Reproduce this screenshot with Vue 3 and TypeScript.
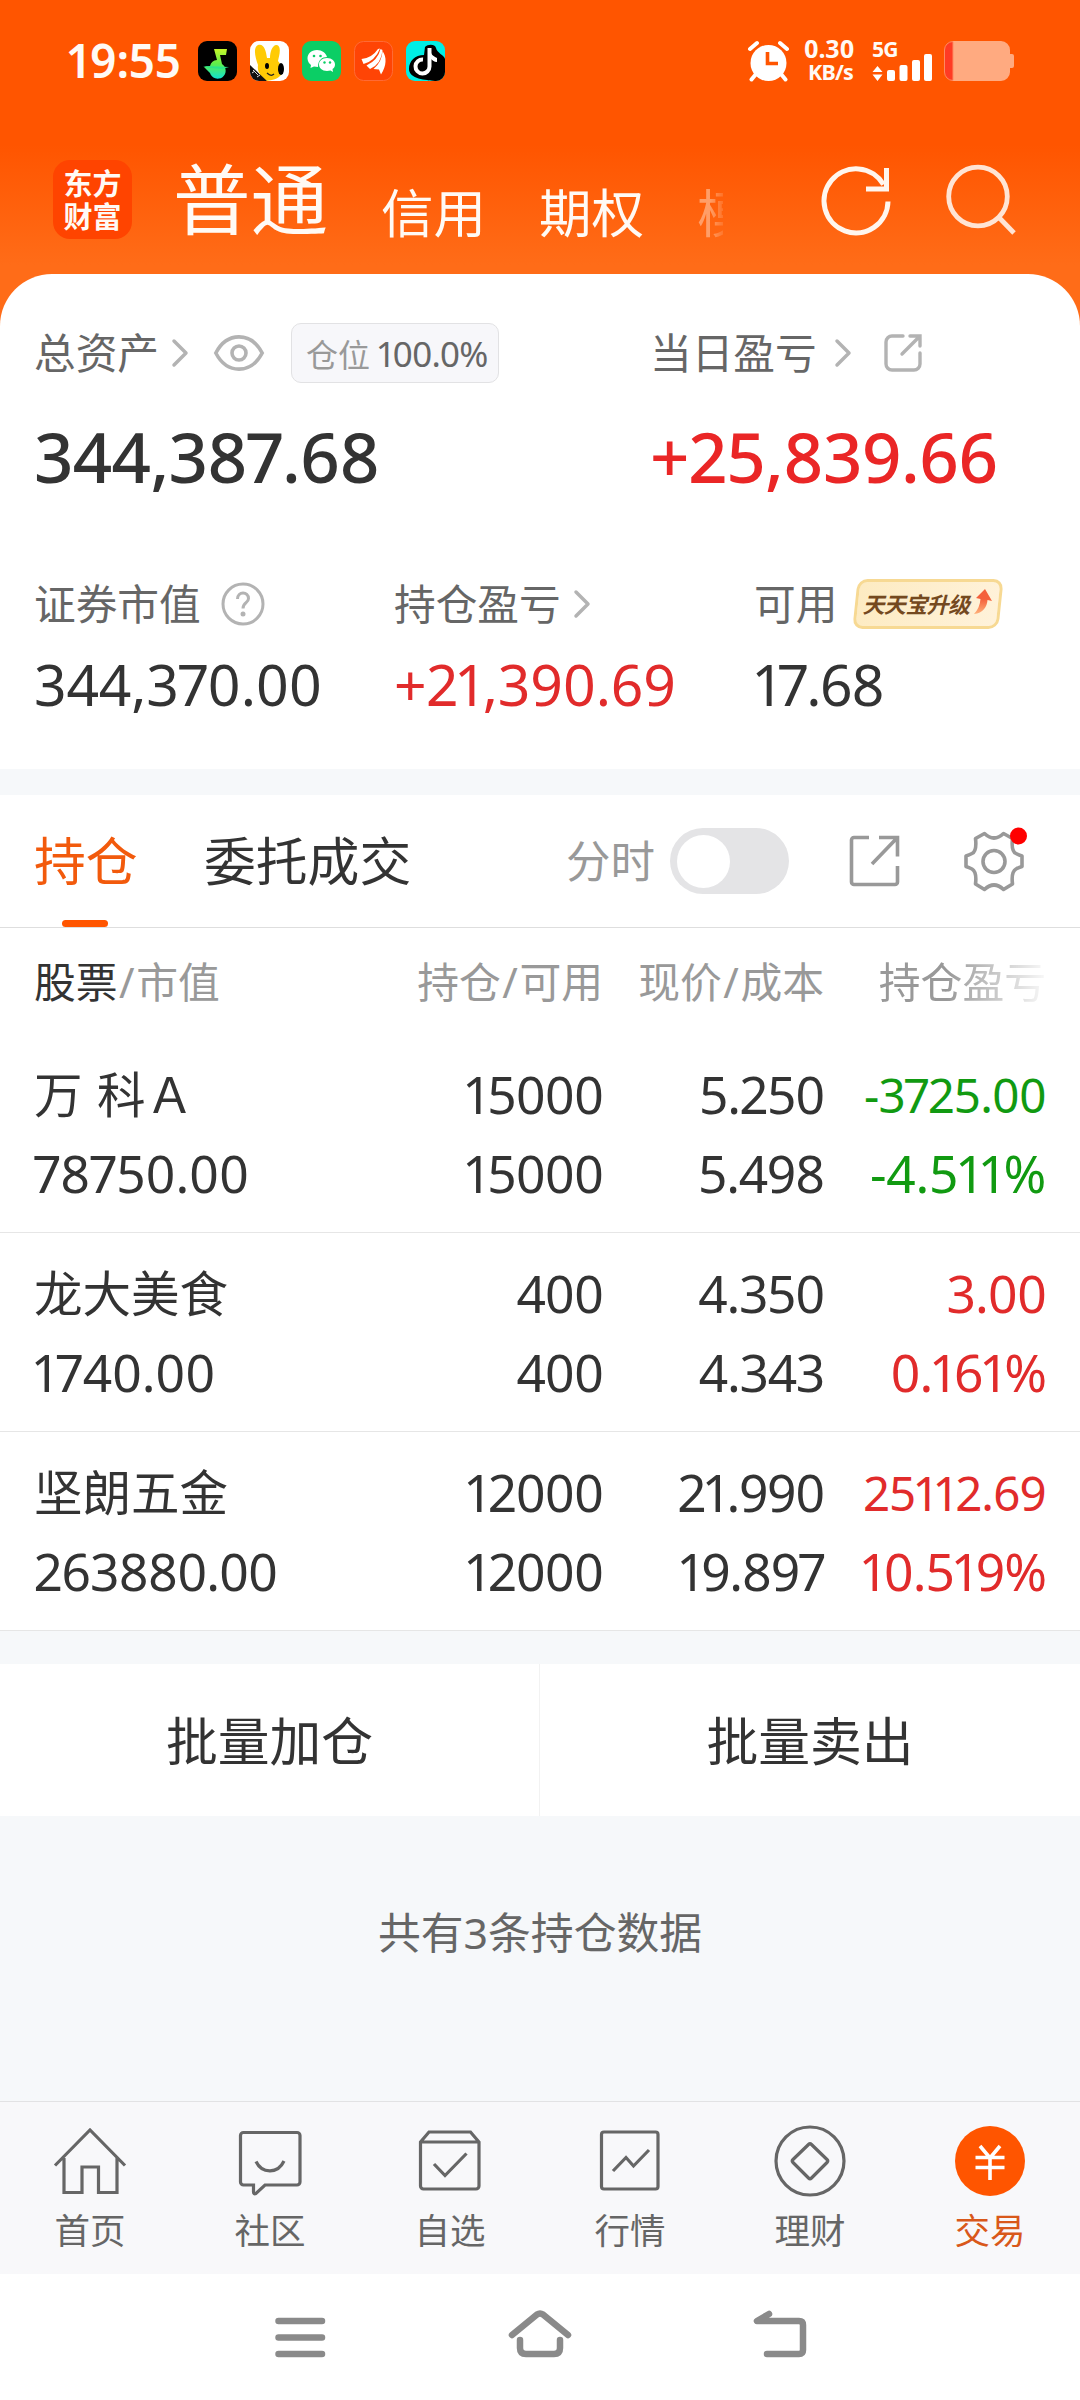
<script setup lang="ts">
interface Cell { text: string; small?: boolean; loose?: boolean; snug?: boolean }
interface Holding { name: string; tone: 'up' | 'down'; cells: Cell[][] }

const holdings: Holding[] = [
  {
    name: '万 科Ａ',
    tone: 'down',
    cells: [
      [{ text: '78750.00', loose: true }],
      [{ text: '15000' }, { text: '15000' }],
      [{ text: '5.250', snug: true }, { text: '5.498', snug: true }],
      [{ text: '-3725.00', small: true }, { text: '-4.511%', loose: true }],
    ],
  },
  {
    name: '龙大美食',
    tone: 'up',
    cells: [
      [{ text: '1740.00', loose: true }],
      [{ text: '400' }, { text: '400' }],
      [{ text: '4.350', snug: true }, { text: '4.343', snug: true }],
      [{ text: '3.00' }, { text: '0.161%' }],
    ],
  },
  {
    name: '坚朗五金',
    tone: 'up',
    cells: [
      [{ text: '263880.00' }],
      [{ text: '12000' }, { text: '12000' }],
      [{ text: '21.990', snug: true }, { text: '19.897', snug: true }],
      [{ text: '25112.69', small: true }, { text: '10.519%' }],
    ],
  },
]

const tabs = ['首页', '社区', '自选', '行情', '理财', '交易']
</script>

<template>
  <div class="screen">
    <header class="top">
      <div class="status">
        <span class="clock">19:55</span>
        <div class="apps">
          <svg viewBox="0 0 39 40">
            <defs>
              <linearGradient id="note" x1="0" y1="0" x2="0" y2="1">
                <stop offset="0" stop-color="#c6f528" /><stop offset=".5" stop-color="#5fee4a" /><stop offset="1" stop-color="#10e3d0" />
              </linearGradient>
            </defs>
            <rect width="39" height="40" rx="9" fill="#000" />
            <path d="M16 8H29L28 14H22L24 23A8 8 0 1 1 12 32L6 26L12 25A8 8 0 0 1 19 19Z" fill="url(#note)" />
            <path d="M5 25L31 26L24 28L12 27Z" fill="#2be58a" />
          </svg>
          <svg viewBox="0 0 39 40">
            <rect width="39" height="40" rx="9" fill="#fff" />
            <path d="M8 24C5 16 3 6 8 4C14 2 16 10 17 17H20C20 10 23 3 27 4C32 6 29 15 28 20C32 24 33 30 31 34C28 38 22 39 17 40C10 36 7 30 8 24Z" fill="#ffcb05" />
            <path d="M0 24L17 40H9A9 9 0 0 1 0 31Z" fill="#111" />
            <ellipse cx="17" cy="25" rx="2" ry="3" /><ellipse cx="31" cy="28" rx="3" ry="6" />
            <path d="M17 32Q21 36 24 33" fill="none" stroke="#222" stroke-width="1.2" />
            <path d="M3 29L8 34M5 28L10 33M2 32L5 30M7 36L10 34" stroke="#ddd" stroke-width="1" />
          </svg>
          <svg viewBox="0 0 39 40">
            <rect width="39" height="40" rx="9" fill="#0bce65" />
            <path d="M15 9C9 9 5.500 13 5.500 17.500C5.500 20 7 22.500 9 24L8.500 27L12 25.500L16 26C16 19 20 16 25 16C24 12 20 9 15 9Z" fill="#fff" />
            <path d="M25 17C20 17 17 20 17 23.500C17 27 20 30 25 30L28.500 29.500L31 31L30.500 28C32 27 33 25.500 33 23.500C33 20 30 17 25 17Z" fill="#fff" />
            <g fill="#0bce65"><circle cx="12" cy="15" r="1.300" /><circle cx="18.500" cy="15" r="1.300" /><circle cx="22.500" cy="21.500" r="1.200" /><circle cx="28" cy="21.500" r="1.200" /></g>
          </svg>
          <svg viewBox="0 0 39 40">
            <rect x=".5" y=".5" width="38" height="39" rx="9" fill="#ff4405" stroke="#ff6a35" />
            <g fill="#fff">
              <path d="M7.500 18Q18 17 24 8L26 7.500Q21 20 9.500 23Z" />
              <path d="M12.500 24.500Q24 19 26.500 8L28.500 9Q27.500 23 16 28Z" />
              <path d="M19.500 28Q28 21 28.500 10C33 16 32.500 25 27 33.500L25 28.500Z" />
            </g>
          </svg>
          <svg viewBox="0 0 39 40">
            <rect width="39" height="40" rx="9" fill="#00eee5" />
            <path d="M19 6C22 3 29 3 30 7C31 12 38 14 39 18V31A9 9 0 0 1 30 40H29C20 39 3 38 3 28C3 20 9 14 18 14Z" fill="#000" />
            <path d="M23.500 7V25.500A7 7 0 1 1 17 18.500" fill="none" stroke="#fff" stroke-width="4" />
            <path d="M24 8C25 14 27 15 31 17V21C28 21 26 19 24 17Z" fill="#fff" />
          </svg>
        </div>
        <svg class="alarm" viewBox="0 0 41 40">
          <circle cx="20.500" cy="22" r="18" fill="#fff" />
          <path d="M2 8L9 2M39 8L32 2M8 33L3.500 38.500M33 33L37.500 38.500" stroke="#fff" stroke-width="4" stroke-linecap="round" />
          <path d="M19.500 11V22.500H30" fill="none" stroke="#ff5500" stroke-width="3.600" />
        </svg>
        <div class="rate"><span>0.30</span><small>KB/s</small></div>
        <div class="signal">
          <b>5G</b>
          <svg viewBox="0 0 61 28">
            <path d="M5.500 12L10.500 18H.5ZM5.500 27L.5 20.500H10.500Z" fill="#fff" />
            <g fill="#fff"><rect x="15" y="16" width="8" height="11" rx="2" /><rect x="27.500" y="11" width="8" height="16" rx="2" /><rect x="40" y="6" width="8" height="21" rx="2" /><rect x="52" y="0" width="8" height="27" rx="2" /></g>
          </svg>
        </div>
        <svg class="battery" viewBox="0 0 70 40">
          <path d="M10 0H57A9 9 0 0 1 66 9V13H68A2 2 0 0 1 70 15V25A2 2 0 0 1 68 27H66V31A9 9 0 0 1 57 40H9V0Z" fill="#ffaa80" />
          <path d="M9 .5A8.500 8.500 0 0 0 .5 9V31A8.500 8.500 0 0 0 9 39.500Z" fill="#ff3b24" stroke="#ff8a60" stroke-width="1" />
        </svg>
      </div>
      <div class="nav">
        <div class="logo"><span>东方</span><span>财富</span></div>
        <span class="main">普通</span>
        <span class="alt">信用</span>
        <span class="alt">期权</span>
        <span class="alt cut">模拟</span>
        <svg class="refresh" viewBox="0 0 70 74">
          <path d="M62.500 20.500A32 32 0 1 0 67 37.500" fill="none" stroke="#fff6ee" stroke-width="5" />
          <path d="M65.500 4V25H45" fill="none" stroke="#fff6ee" stroke-width="5" />
        </svg>
        <svg class="search" viewBox="0 0 72 74">
          <circle cx="32" cy="32.500" r="29.300" fill="none" stroke="#ffe4d4" stroke-width="4.800" />
          <path d="M52.500 53L68 69" stroke="#ffe4d4" stroke-width="4.800" />
        </svg>
      </div>
    </header>

    <section class="assets">
      <div class="line first">
        <div class="half">
          <span class="label">总资产</span>
          <svg class="chev" viewBox="0 0 16 28"><path d="M2 2L14 14L2 26" /></svg>
          <svg class="eye" viewBox="0 0 50 36">
            <path d="M1.800 18C13-3.500 37-3.500 48.200 18C37 39.500 13 39.500 1.800 18Z" /><circle cx="25" cy="18" r="7" />
          </svg>
          <span class="pill">仓位<b>100.0%</b></span>
        </div>
        <div class="half">
          <span class="label">当日盈亏</span>
          <svg class="chev wide" viewBox="0 0 16 28"><path d="M2 2L14 14L2 26" /></svg>
          <svg class="share" viewBox="0 0 38 38">
            <path d="M19 2H8A6 6 0 0 0 2 8V30A6 6 0 0 0 8 36H30A6 6 0 0 0 36 30V19M26 2H36V12M36 2L18 20" />
          </svg>
        </div>
      </div>
      <div class="line big">
        <span class="half num">344,387.68</span>
        <span class="half num up">+25,839.66</span>
      </div>
      <div class="trio">
        <div>
          <div class="cap">
            <span class="label">证券市值</span>
            <svg class="help" viewBox="0 0 44 44"><circle cx="22" cy="22" r="20" /><path d="M16.500 17C16.500 9 27.500 9 27.500 16.500C27.500 21 22 20.500 22 26.500" /><circle class="dot" cx="22" cy="32" r="2.500" /></svg>
          </div>
          <span class="num">344,370.00</span>
        </div>
        <div>
          <div class="cap">
            <span class="label">持仓盈亏</span>
            <svg class="chev" viewBox="0 0 16 28"><path d="M2 2L14 14L2 26" /></svg>
          </div>
          <span class="num up">+21,390.69</span>
        </div>
        <div>
          <div class="cap">
            <span class="label">可用</span>
            <div class="promo">
              <span>天天宝升级</span>
              <svg viewBox="0 0 18 26"><defs><linearGradient id="arr" x1="0" y1="1" x2="0" y2="0"><stop offset="0" stop-color="#ffb27a" /><stop offset=".6" stop-color="#f4603c" /></linearGradient></defs><path d="M11 0L18 12L13.500 11C13 18 9 24 0 25C4 21 6 16 6.500 10L2 9Z" fill="url(#arr)" /></svg>
            </div>
          </div>
          <span class="num tight">17.68</span>
        </div>
      </div>
    </section>

    <section class="tools">
      <span class="tab on">持仓</span>
      <span class="tab">委托成交</span>
      <span class="minute">分时</span>
      <span class="toggle"><i></i></span>
      <svg class="export" viewBox="0 0 52 52"><path d="M20 2.500H5A2.500 2.500 0 0 0 2.500 5V47A2.500 2.500 0 0 0 5 49.500H46A2.500 2.500 0 0 0 48.500 47V31M30 2.500H48.500V21.500M48.500 2.500L23 29" /></svg>
      <svg class="gear" viewBox="0 0 64 68">
        <path d="M22.500 6.500Q32 15.500 41.500 6.500L50.500 11.500Q49 24 54 26.500Q57 28 60 29V39.500Q57 40.500 54 42Q49 45 50.500 57L41.500 62.500Q32 53.500 22.500 62.500L13.500 57Q15 45 10 42Q7 40.500 4 39.500V29Q7 28 10 26.500Q15 24 13.500 11.500Z" />
        <circle cx="32" cy="34.500" r="11" /><circle class="red" cx="56.500" cy="9" r="8.500" />
      </svg>
    </section>

    <section class="table">
      <div class="thead">
        <span><b>股票</b><i>/</i>市值</span><span>持仓<i>/</i>可用</span><span>现价<i>/</i>成本</span><span class="fade">持仓盈亏</span>
      </div>
      <div v-for="h in holdings" :key="h.name" class="row">
        <div v-for="(col, i) in h.cells" :key="i" :class="i === 3 ? h.tone : ''">
          <span v-if="i === 0" class="name">{{ h.name }}</span>
          <span v-for="(c, j) in col" :key="j" :class="{ small: c.small, loose: c.loose, snug: c.snug }">{{ c.text }}</span>
        </div>
      </div>
    </section>

    <section class="batch"><span>批量加仓</span><span>批量卖出</span></section>
    <p class="count">共有3条持仓数据</p>

    <nav class="tabbar">
      <div v-for="(t, i) in tabs" :key="t" :class="{ active: i === 5 }">
        <svg viewBox="0 0 80 80">
          <path v-if="i === 0" d="M5 44.500L40 9L75 44.500M14 37V71.500H32V46H48.500V71.500H67V37" />
          <template v-else-if="i === 1">
            <path d="M13.500 11.500H67A3 3 0 0 1 70 14.500V61A3 3 0 0 1 67 64H35L26 72.500Q23.500 73.500 23.500 71V64H13.500A3 3 0 0 1 10.500 61V14.500A3 3 0 0 1 13.500 11.500Z" />
            <path d="M26 40.500C32 53 48 53 54 40" />
          </template>
          <template v-else-if="i === 2">
            <path d="M10.500 21L19 11H60.500L69 21V65A3 3 0 0 1 66 68H13.500A3 3 0 0 1 10.500 65ZM10.500 21H69M24 43L35 54.500L56.500 32.500" />
          </template>
          <template v-else-if="i === 3">
            <rect x="11.500" y="11" width="56.500" height="57" rx="2.500" /><path d="M23 50L36 36.500L43.500 45L59 29" />
          </template>
          <template v-else-if="i === 4">
            <circle cx="40" cy="40" r="34" /><path d="M38.500 23.500Q40 22 41.500 23.500L57 38.500Q58.500 40 57 41.500L41.500 57Q40 58.500 38.500 57L23 41.500Q21.500 40 23 38.500Z" />
          </template>
          <template v-else>
            <circle class="coin" cx="40" cy="40" r="35" />
            <path class="yen" d="M30 25L40 37L50 25M25.500 36.500H54.500M25.500 46.500H54.500M40 36.500V59" />
          </template>
        </svg>
        <span>{{ t }}</span>
      </div>
    </nav>

    <footer class="system">
      <svg viewBox="0 0 64 50"><path d="M10.500 11H54M10.500 27.500H54M10.500 44H54" /></svg>
      <svg viewBox="0 0 64 50"><path d="M4 25L29 4.500Q32 2.500 35 4.500L60 25M12 30V38Q12 44 18 44H46Q52 44 52 38V30" /></svg>
      <svg viewBox="0 0 64 50"><path d="M21 4L9 11H51Q55 11 55 15V40Q55 44 51 44H19" /></svg>
    </footer>
  </div>
</template>

<style>
body { background: #fff; }
</style>

<style scoped>
.screen {
  width: 1080px;
  height: 2400px;
  display: flex;
  flex-direction: column;
  background: #f6f8fa;
  color: #333;
  font-family: 'Noto Sans', 'Noto Sans CJK SC', sans-serif;
  font-variant-numeric: proportional-nums;
  white-space: nowrap;
  overflow: hidden;
}
svg { display: block; flex: none; overflow: visible; }
b { font-weight: inherit; }
.up { color: #e12b2b; }
.down { color: #119a11; }

.top {
  height: 326px;
  flex: none;
  background: linear-gradient(#f50 0, #f50 145px, #ff6c18 265px);
  color: #fffaf5;
}
.status { height: 122px; display: flex; align-items: center; padding-left: 68px; }
.clock { width: 130px; font-size: 46px; font-weight: 600; line-height: 60px; letter-spacing: -0.6px; margin-top: -3px; }
.apps { display: flex; gap: 13px; }
.apps svg { width: 39px; height: 40px; }
.alarm { width: 41px; height: 40px; margin-left: 303px; }
.rate { width: 52px; margin-left: 14px; margin-top: -2px; display: flex; flex-direction: column; align-items: center; font-weight: 700; font-size: 25px; line-height: 23px; letter-spacing: -0.2px; }
.rate small { font-size: 21.500px; line-height: 23px; letter-spacing: -0.8px; padding-left: 3px; }
.signal { width: 61px; margin-left: 17px; height: 42px; }
.signal b { display: block; font-weight: 700; font-size: 21px; line-height: 18px; height: 14px; letter-spacing: -0.8px; }
.signal svg { width: 61px; height: 28px; }
.battery { width: 70px; height: 40px; margin-left: 11px; }

.nav { height: 152px; display: flex; padding-left: 53px; }
.logo {
  width: 79px; height: 79px; margin-top: 38px; border-radius: 17px; background: #ff4400;
  display: flex; flex-direction: column; align-items: center; justify-content: center;
  font-size: 29px; font-weight: 700; line-height: 33px;
}
.logo span { height: 33px; }
.main { margin: 32px 0 0 41px; font-size: 77.500px; line-height: 90px; width: 208px; }
.alt { margin-top: 61px; font-size: 52.500px; line-height: 60px; width: 158px; }
.cut {
  width: 26px; overflow: hidden; color: #ff9e68;
  -webkit-mask-image: linear-gradient(90deg, #000 50%, rgba(0, 0, 0, 0.3));
  mask-image: linear-gradient(90deg, #000 50%, rgba(0, 0, 0, 0.3));
}
.refresh { width: 70px; height: 74px; margin: 42px 0 0 98px; }
.search { width: 72px; height: 74px; margin: 42px 0 0 55px; }

.assets { height: 495px; flex: none; margin-top: -52px; background: #fff; border-radius: 52px 52px 0 0; }
.line { display: flex; padding-left: 34px; }
.half { width: 616px; flex: none; display: flex; align-items: center; }
.line .half + .half { width: 430px; }
.first { padding-top: 49px; height: 60px; }
.label { font-size: 41.700px; line-height: 56px; color: #666; }
.chev { width: 16px; height: 28px; margin-left: 13px; fill: none; stroke: #b3b3b3; stroke-width: 3.500; stroke-linecap: round; stroke-linejoin: round; }
.chev.wide { margin-left: 18px; }
.eye { width: 50px; height: 36px; margin-left: 26px; fill: none; stroke: #b3b3b3; stroke-width: 3.600; }
.pill {
  margin-left: 27px; width: 208px; height: 60px; box-sizing: border-box; border: 1px solid #e2e2e4; border-radius: 10px;
  background: #f7f7fa; padding-left: 14px; font-size: 32px; line-height: 59px; color: #999;
}
.pill b { font-size: 35px; color: #666; margin-left: 8px; letter-spacing: -1px; }
.share { width: 38px; height: 38px; margin-left: 33px; fill: none; stroke: #b3b3b3; stroke-width: 3.400; stroke-linecap: round; }
.big { padding-top: 35px; font-size: 69px; line-height: 76px; font-weight: 500; letter-spacing: -0.800px; }
.big .up { color: #ea2626; }
.trio { display: flex; padding: 80px 0 0 34px; }
.trio > div { width: 360px; flex: none; }
.trio > div:last-child { width: 320px; }
.cap { display: flex; align-items: center; height: 60px; }
.trio .num { display: block; font-size: 57px; line-height: 64px; margin-top: 18px; letter-spacing: -0.200px; }
.trio .tight { letter-spacing: -1.500px; padding-left: 1px; }
.help { width: 44px; height: 44px; margin-left: 20px; fill: none; stroke: #b3b3b3; stroke-width: 3; }
.help .dot { fill: #b3b3b3; stroke: none; }
.promo { position: relative; z-index: 0; margin-left: 16px; width: 150px; height: 50px; display: flex; align-items: center; padding-left: 9px; box-sizing: border-box; }
.promo::before { content: ''; position: absolute; inset: 0 2px; z-index: -1; box-sizing: border-box; border: 3px solid #f7d993; border-radius: 10px; background: linear-gradient(100deg, #fdebc2, #fff2da); transform: skewX(-6deg); }
.promo span { font-size: 22px; font-weight: 700; font-style: italic; line-height: 30px; color: #74491f; letter-spacing: -0.6px; }
.promo svg { width: 18px; height: 26px; margin-left: 5px; margin-top: -4px; }

.tools { height: 133px; margin-top: 26px; flex: none; box-sizing: border-box; border-bottom: 1px solid #dedede; background: #fff; display: flex; align-items: center; padding-left: 34px; }
.tab { font-size: 51.800px; line-height: 60px; width: 362px; }
.tab.on { width: 170px; color: #f25a0c; position: relative; }
.tab.on::after { content: ''; position: absolute; left: 28px; top: 89px; width: 46px; height: 7px; border-radius: 4px; background: #f50; }
.minute { width: 104px; font-size: 44.500px; line-height: 64px; color: #999; }
.toggle { width: 119px; height: 66px; border-radius: 33px; background: #e4e4e6; display: flex; align-items: center; padding-left: 7px; box-sizing: border-box; }
.toggle i { width: 53px; height: 53px; border-radius: 50%; background: #fff; }
.export { width: 52px; height: 52px; margin-left: 60px; fill: none; stroke: #999; stroke-width: 3.600; }
.gear { width: 64px; height: 68px; margin-left: 61px; margin-top: -1px; fill: none; stroke: #999; stroke-width: 3.600; stroke-linejoin: round; }
.gear .red { fill: #f00; stroke: none; }

.table { flex: none; background: #fff; }
.thead, .row { display: grid; grid-template-columns: 321px 248px 221px 222px; padding: 0 34px; }
.thead { height: 106px; font-size: 41.800px; line-height: 108px; color: #999; }
.thead b { color: #333; }
.thead i { font-style: normal; padding: 0 1.500px; }
.thead > :not(:first-child), .row > :not(:first-child) { text-align: right; }
.fade { -webkit-mask-image: linear-gradient(90deg, #000 55%, rgba(0, 0, 0, 0.1) 98%); mask-image: linear-gradient(90deg, #000 55%, rgba(0, 0, 0, 0.1) 98%); }
.row { height: 199px; box-sizing: border-box; border-bottom: 1px solid #e6e6e6; padding-top: 21px; font-size: 51.500px; line-height: 79px; letter-spacing: -1px; }
.row span { display: block; height: 79px; }
.row .name { font-size: 48.500px; letter-spacing: 0; word-spacing: 2px; }
.row .small { font-size: 47.500px; letter-spacing: -0.800px; }
.row .loose { letter-spacing: -0.200px; }
.row .snug { letter-spacing: -1.300px; }

.batch { height: 152px; margin-top: 33px; flex: none; background: #fff; display: flex; font-size: 51.800px; line-height: 154px; }
.batch span { width: 540px; box-sizing: border-box; text-align: center; }
.batch span:first-child { border-right: 1px solid #f2f2f2; }
.count { margin: 85px 0 0; height: 200px; flex: none; text-align: center; font-size: 42.800px; line-height: 64px; color: #666; }

.tabbar { height: 173px; flex: none; box-sizing: border-box; border-top: 1px solid #e2e2e4; background: #f8f8fa; display: flex; padding-top: 19px; }
.tabbar div { width: 180px; display: flex; flex-direction: column; align-items: center; color: #666; font-size: 35.500px; line-height: 50px; }
.tabbar svg { width: 80px; height: 80px; fill: none; stroke: #666; stroke-width: 3.200; }
.tabbar span { margin-top: 4px; }
.tabbar .active { color: #d9581a; }
.tabbar .coin { fill: #f50; stroke: none; }
.tabbar .yen { stroke: #fff; stroke-width: 3.600; }

.system { flex: 1; background: #fff; display: flex; justify-content: center; gap: 176px; padding-top: 36px; }
.system svg { width: 64px; height: 50px; fill: none; stroke: #8a8a8a; stroke-width: 6.500; stroke-linecap: round; stroke-linejoin: round; }
</style>
